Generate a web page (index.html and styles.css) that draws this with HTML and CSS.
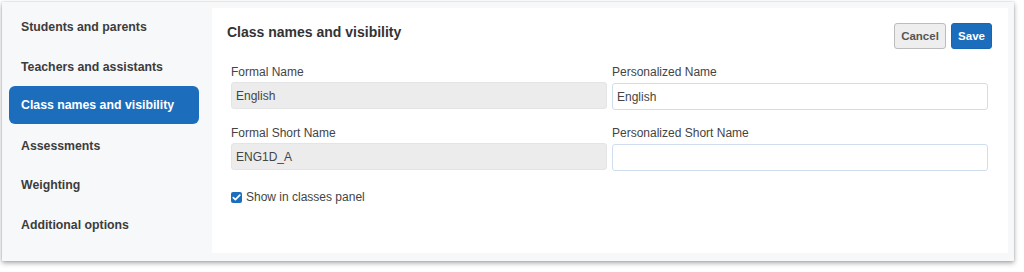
FILE: index.html
```html
<!DOCTYPE html>
<html lang="en">
<head>
<meta charset="utf-8">
<title>Class names and visibility</title>
<link rel="stylesheet" href="styles.css">
</head>
<body>
<div class="card">
  <nav class="sidebar">
    <a class="nav-item">Students and parents</a>
    <a class="nav-item">Teachers and assistants</a>
    <a class="nav-item active">Class names and visibility</a>
    <a class="nav-item">Assessments</a>
    <a class="nav-item">Weighting</a>
    <a class="nav-item">Additional options</a>
  </nav>
  <main class="panel">
    <div class="header">
      <h1 class="title">Class names and visibility</h1>
      <div class="actions">
        <button class="btn btn-cancel">Cancel</button>
        <button class="btn btn-save">Save</button>
      </div>
    </div>
    <div class="form">
      <div class="field">
        <label class="label">Formal Name</label>
        <div class="input input-readonly">English</div>
      </div>
      <div class="field">
        <label class="label">Personalized Name</label>
        <div class="input input-edit">English</div>
      </div>
      <div class="field">
        <label class="label">Formal Short Name</label>
        <div class="input input-readonly">ENG1D_A</div>
      </div>
      <div class="field">
        <label class="label">Personalized Short Name</label>
        <div class="input input-edit"></div>
      </div>
      <div class="check-row">
        <span class="checkbox"><svg width="11" height="11" viewBox="0 0 11 11"><path d="M2.3 5.6 L4.4 7.7 L8.8 3.1" fill="none" stroke="#fff" stroke-width="1.7" stroke-linecap="round" stroke-linejoin="round"/></svg></span>
        <span class="check-label">Show in classes panel</span>
      </div>
    </div>
  </main>
</div>
</body>
</html>
```

FILE: styles.css
```css
* { box-sizing: border-box; }
html, body { margin: 0; padding: 0; background: #ffffff; }
body {
  font-family: "Liberation Sans", Arial, sans-serif;
  width: 1024px;
  height: 272px;
  overflow: hidden;
}
.card {
  margin: 2px 0 0 2px;
  width: 1012px;
  height: 259px;
  display: flex;
  background: #f7f8fa;
  box-shadow: 0 2px 5px rgba(0, 0, 0, 0.35), 0 0 1px rgba(0, 0, 0, 0.25);
}
.sidebar {
  width: 210px;
  flex: none;
  padding: 6px 13px 0 7px;
  display: flex;
  flex-direction: column;
  gap: 1.6px;
}
.nav-item {
  display: flex;
  align-items: center;
  height: 38px;
  padding-left: 12px;
  border-radius: 6px;
  font-size: 12.3px;
  font-weight: bold;
  color: #3c3c3c;
}
.nav-item.active {
  margin-top: -1px;
  margin-bottom: 1px;
  background: #1c6ebd;
  color: #ffffff;
}
.panel {
  flex: 1;
  margin: 6px 6px 8px 0;
  background: #ffffff;
  padding: 15px 16px 0 15px;
}
.header {
  display: flex;
  justify-content: space-between;
  align-items: flex-start;
}
.title {
  margin: 0;
  font-size: 14px;
  line-height: 18px;
  font-weight: bold;
  color: #333333;
}
.actions {
  display: flex;
  gap: 5px;
}
.btn {
  font-family: inherit;
  height: 26px;
  border-radius: 3px;
  font-size: 11.5px;
  font-weight: bold;
  padding: 0;
  line-height: 24px;
  text-align: center;
}
.btn-cancel {
  width: 52px;
  background: #eeeeee;
  border: 1px solid #bcbcbc;
  color: #555555;
}
.btn-save {
  width: 41px;
  background: #1c6ebd;
  border: 1px solid #1866b2;
  color: #ffffff;
}
.form {
  margin-top: 16px;
  padding: 0 4px;
  display: grid;
  grid-template-columns: 376px 376px;
  column-gap: 5px;
  row-gap: 16px;
}
.field {
  display: flex;
  flex-direction: column;
  gap: 2px;
}
.label {
  font-size: 12px;
  line-height: 15px;
  color: #444444;
}
.input {
  height: 27px;
  border-radius: 3px;
  padding: 2px 4px 0;
  font-size: 12px;
  line-height: 23px;
  color: #444444;
}
.input-readonly {
  background: #ececec;
  border: 1px solid #e4e4e4;
}
.input-edit {
  background: #ffffff;
  border: 1px solid #cfdeee;
  margin-top: 1px;
}
.check-row {
  grid-column: 1 / 3;
  margin-top: 2px;
  display: flex;
  align-items: center;
  gap: 4px;
  height: 16px;
}
.checkbox {
  width: 11px;
  height: 11px;
  border-radius: 2px;
  background: #1c6ebd;
  display: flex;
}
.check-label {
  font-size: 12px;
  color: #444444;
}
```
